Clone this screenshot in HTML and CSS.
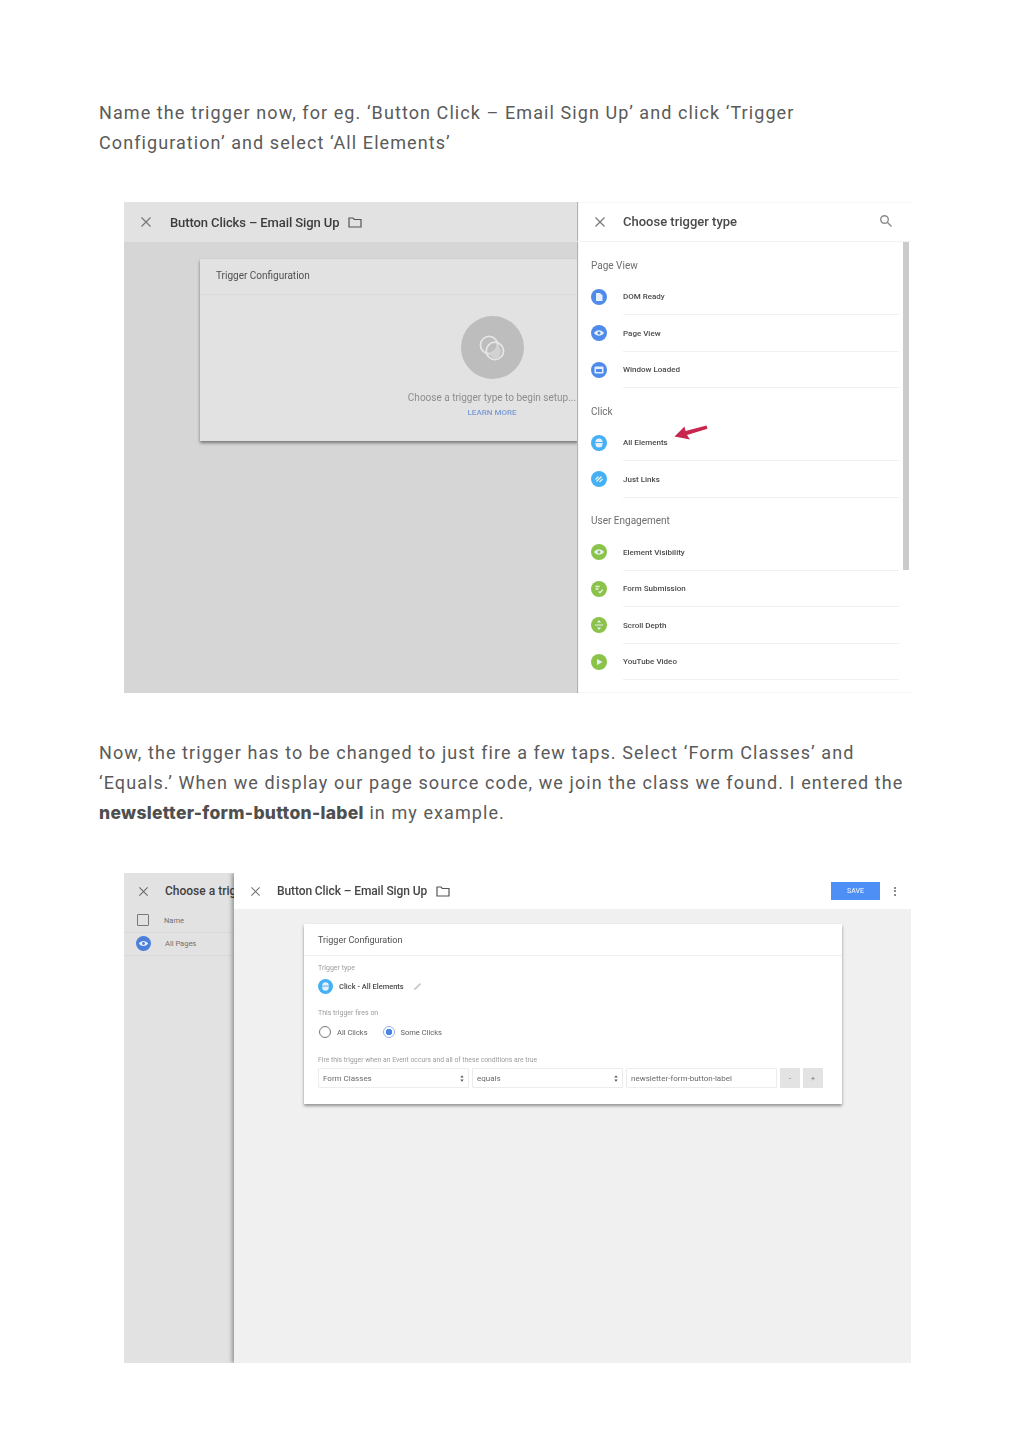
FILE: index.html
```html
<!DOCTYPE html>
<html lang="en">
<head>
<meta charset="utf-8">
<title>Trigger setup</title>
<link rel="stylesheet" href="styles.css">
</head>
<body>
<main class="article">
  <p class="para">Name the trigger now, for eg. ‘Button Click – Email Sign Up’ and click ‘Trigger Configuration’ and select ‘All Elements’</p>

  <figure class="shot shot-one">
    <section class="dim-pane">
      <header class="bar bar-dim">
        <svg class="x" viewBox="0 0 12 12"><path d="M1.5 1.5l9 9M10.5 1.5l-9 9"/></svg>
        <span class="bar-title">Button Clicks – Email Sign Up</span>
        <svg class="folder" viewBox="0 0 14 12"><path d="M1 2h4l1.3 1.5H13V11H1z"/></svg>
      </header>
      <div class="config-card">
        <div class="config-head">Trigger Configuration</div>
        <div class="config-empty">
          <div class="disc">
            <svg viewBox="0 0 26 26"><circle cx="10.5" cy="10.5" r="7.5"/><circle cx="15.5" cy="15.5" r="7.5"/><path class="wedge" d="M10 17a7.5 7.5 0 0 0 7-7 7.5 7.5 0 0 1 1 12 7.500 7.500 0 0 1-8-5z"/></svg>
          </div>
          <p class="empty-text">Choose a trigger type to begin setup...</p>
          <p class="empty-link">LEARN MORE</p>
        </div>
      </div>
    </section>
    <aside class="chooser">
      <header class="bar bar-white">
        <svg class="x" viewBox="0 0 12 12"><path d="M1.5 1.5l9 9M10.500 1.5l-9 9"/></svg>
        <span class="chooser-title">Choose trigger type</span>
        <svg class="search" viewBox="0 0 14 14"><circle cx="5.500" cy="5.500" r="3.800"/><path d="M8.500 8.500l4 4"/></svg>
      </header>
      <div class="chooser-body">
        <div class="list">
          <h3 class="group">Page View</h3>
          <div class="row"><span class="dot blue"><svg viewBox="0 0 16 16"><path class="fill" d="M5 4h4l2.500 2.500V12H5z"/></svg></span><span class="row-text">DOM Ready</span></div>
          <div class="row"><span class="dot blue"><svg viewBox="0 0 16 16"><path class="fill" d="M3 8c2.500-3.600 7.500-3.600 10 0-2.500 3.600-7.500 3.600-10 0z"/><circle class="inner-blue" cx="8" cy="8" r="1.500"/></svg></span><span class="row-text">Page View</span></div>
          <div class="row"><span class="dot blue"><svg viewBox="0 0 16 16"><rect class="fill" x="3.500" y="4.500" width="9" height="7" rx="1"/><rect class="inner-blue" x="5" y="7" width="6" height="3"/></svg></span><span class="row-text">Window Loaded</span></div>
          <h3 class="group">Click</h3>
          <div class="row"><span class="dot sky"><svg viewBox="0 0 16 16"><rect class="fill" x="4.500" y="3.500" width="7" height="9" rx="3.500"/><path class="cut-sky" d="M4.500 7.500h7"/></svg></span><span class="row-text">All Elements</span></div>
          <div class="row"><span class="dot sky"><svg viewBox="0 0 16 16"><path class="stroke" d="M5.500 10.500l5-5M4.500 8.500l3-3M8.500 11l3-3"/></svg></span><span class="row-text">Just Links</span></div>
          <h3 class="group">User Engagement</h3>
          <div class="row"><span class="dot green"><svg viewBox="0 0 16 16"><path class="fill" d="M3 8c2.500-3.600 7.500-3.600 10 0-2.500 3.600-7.500 3.600-10 0z"/><circle class="inner-green" cx="8" cy="8" r="1.500"/></svg></span><span class="row-text">Element Visibility</span></div>
          <div class="row"><span class="dot green"><svg viewBox="0 0 16 16"><path class="stroke" d="M4.500 5.500h4M4.500 8h3M7.500 10.500l1.500 1.200 2.800-3"/></svg></span><span class="row-text">Form Submission</span></div>
          <div class="row"><span class="dot green"><svg viewBox="0 0 16 16"><path class="fill" d="M8 3l2 2.500H6zM8 13l-2-2.500h4zM4 7.500h8v1H4z"/></svg></span><span class="row-text">Scroll Depth</span></div>
          <div class="row"><span class="dot green"><svg viewBox="0 0 16 16"><path class="fill" d="M6 5l5.500 3L6 11z"/></svg></span><span class="row-text">YouTube Video</span></div>
        </div>
        <div class="scrollbar"></div>
      </div>
      <svg class="arrow" viewBox="0 0 34 18"><path d="M0.500 11.500L10.500 1.500l1 4.500L32.500 0.500l1 3.200-20.500 6.300 3 4.500z"/></svg>
    </aside>
  </figure>

  <p class="para para-two">Now, the trigger has to be changed to just fire a few taps. Select ‘Form Classes’ and ‘Equals.’ When we display our page source code, we join the class we found. I entered the <strong>newsletter-form-button-label</strong> in my example.</p>

  <figure class="shot shot-two">
    <section class="back-pane">
      <header class="back-head">
        <svg class="x" viewBox="0 0 12 12"><path d="M1.500 1.500l9 9M10.500 1.500l-9 9"/></svg>
        <span class="back-title">Choose a trigger</span>
      </header>
      <div class="back-row back-row-first"><span class="check"></span><span>Name</span></div>
      <div class="back-row"><span class="dot blue-deep"><svg viewBox="0 0 16 16"><path class="fill" d="M3 8c2.500-3.600 7.500-3.600 10 0-2.500 3.600-7.500 3.600-10 0z"/><circle class="inner-deep" cx="8" cy="8" r="1.500"/></svg></span><span>All Pages</span></div>
    </section>
    <section class="edit-pane">
      <header class="bar bar-edit">
        <svg class="x" viewBox="0 0 12 12"><path d="M1.500 1.500l9 9M10.500 1.500l-9 9"/></svg>
        <span class="bar-title">Button Click – Email Sign Up</span>
        <svg class="folder" viewBox="0 0 14 12"><path d="M1 2h4l1.300 1.500H13V11H1z"/></svg>
        <span class="save">SAVE</span>
        <span class="kebab"><i></i><i></i><i></i></span>
      </header>
      <div class="form-card">
        <div class="form-head">Trigger Configuration</div>
        <div class="form-body">
          <div class="caption">Trigger type</div>
          <div class="type-line">
            <span class="dot sky dot-lg"><svg viewBox="0 0 16 16"><rect class="fill" x="4.500" y="3.500" width="7" height="9" rx="3.500"/><path class="cut-sky" d="M4.500 7.500h7"/></svg></span>
            <span class="type-name">Click - All Elements</span>
            <svg class="pencil" viewBox="0 0 10 10"><path d="M1 9l1.800-.4L9 2.400 7.600 1 1.400 7.200z"/></svg>
          </div>
          <div class="caption caption-fires">This trigger fires on</div>
          <div class="radios">
            <span class="radio"></span><span class="radio-label">All Clicks</span>
            <span class="radio radio-on"></span><span class="radio-label">Some Clicks</span>
          </div>
          <div class="caption caption-cond">Fire this trigger when an Event occurs and all of these conditions are true</div>
          <div class="cond">
            <span class="field select">Form Classes<svg class="updown" viewBox="0 0 6 10"><path d="M3 0l2.500 3.500h-5zM3 10L.5 6.500h5z"/></svg></span>
            <span class="field select">equals<svg class="updown" viewBox="0 0 6 10"><path d="M3 0l2.500 3.500h-5zM3 10L.5 6.500h5z"/></svg></span>
            <span class="field value">newsletter-form-button-label</span>
            <span class="mini">-</span>
            <span class="mini">+</span>
          </div>
        </div>
      </div>
    </section>
  </figure>
</main>
</body>
</html>
```
FILE: styles.css
```css
* { box-sizing: border-box; }
html, body { margin: 0; padding: 0; background: #fff; }
body { height: 1449px; overflow: hidden; font-family: "Roboto", "Liberation Sans", sans-serif; }
.article { padding: 98px 0 0 99px; width: 926px; }
.para {
  margin: 0;
  font-family: "Roboto", "Liberation Sans", sans-serif;
  font-size: 18px;
  line-height: 30px;
  letter-spacing: 1.08px;
  color: #5a5a5a;
  font-weight: 400;
}
.para strong { font-family: "Inter", sans-serif; font-weight: 800; letter-spacing: 0.3px; font-size: 17.5px; color: #4f4f4f; }
.para-two { margin-top: 45px; }

.shot { margin: 0; width: 787px; display: flex; overflow: hidden; margin-left: 25px; filter: blur(0.35px); }
.shot-one { margin-top: 44px; height: 491px; }
.shot-two { margin-top: 45px; height: 490px; }

svg { display: block; }
.bar { height: 40px; display: flex; align-items: center; flex: none; }
.x { width: 12px; height: 12px; fill: none; stroke: #777; stroke-width: 1.200; flex: none; }
.bar-title { font-size: 13px; font-weight: 500; color: #3c3c3c; letter-spacing: -0.1px; }
.folder { width: 14px; height: 12px; fill: none; stroke: #555; stroke-width: 1.200; margin-left: 9px; flex: none; }

/* first screenshot */
.dim-pane { width: 453px; flex: none; background: #d6d6d6; display: flex; flex-direction: column; overflow: hidden; }
.bar-dim { background: #e2e2e2; padding-left: 16px; }
.bar-dim .bar-title { margin-left: 18px; }
.config-card {
  margin: 17px -1px 0 76px;
  height: 182px;
  background: #e2e2e2;
  box-shadow: 0 2px 3px rgba(0,0,0,.45);
}
.config-head { height: 36px; border-bottom: 1px solid #dadada; padding: 11px 0 0 16px; font-size: 10px; line-height: 12px; color: #505050; }
.config-empty { margin-left: 204px; width: 176px; display: flex; flex-direction: column; align-items: center; padding-top: 21px; }
.disc { width: 63px; height: 63px; border-radius: 50%; background: #bdbdbd; display: flex; align-items: center; justify-content: center; }
.disc svg { width: 30px; height: 30px; fill: none; stroke: #e6e6e6; stroke-width: 1.500; }
.disc .wedge { fill: #d2d2d2; stroke: none; }
.empty-text { margin: 13px 0 0; font-size: 10px; line-height: 12px; color: #8d8d8d; white-space: nowrap; }
.empty-link { margin: 4px 0 0; font-size: 8px; line-height: 10px; font-weight: 500; color: #7a9bd6; }

.chooser { flex: 1; position: relative; background: #fff; box-shadow: inset 1px 0 1px #a9a9a9; display: flex; flex-direction: column; }
.bar-white { border-bottom: 1px solid #f3f3f3; padding: 0 18px 0 17px; }
.chooser-title { margin-left: 17px; font-size: 13px; font-weight: 500; color: #4a4a4a; flex: 1; }
.search { width: 14px; height: 14px; fill: none; stroke: #8b8b8b; stroke-width: 1.400; margin-top: -2px; }
.chooser-body { flex: 1; display: flex; padding-left: 14px; }
.list { width: 308px; flex: none; }
.group { margin: 0; height: 36.500px; padding-top: 9.500px; display: flex; align-items: center; font-size: 10px; font-weight: 400; color: #6e6e6e; }
.row { height: 36.500px; display: flex; align-items: center; position: relative; }
.row::after { content: ""; position: absolute; left: 32px; right: 0; bottom: 0; height: 1px; background: #f1f1f1; }
.row-text { margin-left: 16px; font-size: 8px; font-weight: 500; color: #4b4b4b; }
.dot { width: 16px; height: 16px; border-radius: 50%; flex: none; display: block; }
.dot svg { width: 100%; height: 100%; }
.blue { background: #4f8bea; }
.sky { background: #45b0f5; }
.green { background: #8bc34a; }
.blue-deep { background: #4a7fdc; }
.fill { fill: #e6effb; }
.stroke { fill: none; stroke: #e9f3e2; stroke-width: 1.300; }
.inner-blue { fill: #4f8bea; }
.inner-green { fill: #8bc34a; }
.inner-deep { fill: #4a7fdc; }
.cut-sky { stroke: #45b0f5; stroke-width: 1; fill: none; }
.scrollbar { width: 6px; height: 328px; margin-left: 4px; background: #cbcbcb; flex: none; }
.arrow { position: absolute; left: 97px; top: 223px; width: 34px; height: 18px; fill: #c9264f; }

/* second screenshot */
.back-pane { width: 110px; flex: none; background: #e2e2e2; display: flex; flex-direction: column; overflow: hidden; }
.back-head { height: 36px; flex: none; display: flex; align-items: center; padding-left: 14px; }
.back-head .x { width: 11px; height: 11px; stroke: #6a6a6a; }
.back-title { margin-left: 16px; font-size: 12px; font-weight: 500; color: #404040; white-space: nowrap; }
.back-row { height: 23.500px; flex: none; display: flex; align-items: center; padding-left: 13px; border-bottom: 1px solid #d9d9d9; font-size: 7.500px; color: #707070; }
.back-row > span:last-child { margin-left: 14px; }
.back-row .dot { width: 15px; height: 15px; margin-left: -1px; }
.check { width: 12px; height: 12px; border: 1.500px solid #777; border-radius: 1px; flex: none; margin-right: 1px; }
.back-row-first { padding-top: 0; }

.edit-pane { flex: 1; background: #f0f0f0; box-shadow: -2px 0 4px rgba(0,0,0,.35); position: relative; display: flex; flex-direction: column; }
.bar-edit { height: 36px; background: #fff; padding: 0 12px 0 16px; }
.bar-edit .x { width: 11px; height: 11px; }
.bar-edit .bar-title { margin-left: 16px; font-size: 12px; color: #454545; }
.save { margin-left: auto; width: 49px; height: 18px; background: #4d8ff5; color: #dfeafc; font-size: 7px; font-weight: 500; display: flex; align-items: center; justify-content: center; }
.kebab { margin-left: 14px; margin-right: 3px; display: flex; flex-direction: column; gap: 1.500px; }
.kebab i { width: 2px; height: 2px; background: #666; border-radius: 50%; display: block; }

.form-card { margin: 15px 0 0 70px; width: 538px; height: 180px; background: #fff; box-shadow: 0 2px 3px rgba(0,0,0,.4); }
.form-head { height: 32px; border-bottom: 1px solid #f0f0f0; padding: 10px 0 0 14px; font-size: 9px; line-height: 12px; color: #505050; }
.form-body { padding: 8px 19px 0 14px; }
.caption { font-size: 7px; line-height: 9px; color: #9c9c9c; }
.type-line { display: flex; align-items: center; margin-top: 5px; height: 16px; }
.dot-lg { width: 15px; height: 15px; }
.type-name { margin-left: 6px; font-size: 7.500px; font-weight: 500; color: #4a4a4a; }
.pencil { width: 9px; height: 9px; margin-left: 9px; fill: #c9c9c9; }
.caption-fires { margin-top: 15px; }
.radios { display: flex; align-items: center; margin-top: 7px; height: 14px; }
.radio { width: 12px; height: 12px; border: 1.300px solid #777; border-radius: 50%; flex: none; display: block; margin-left: 1px; }
.radio-on { border-color: #8fb4ef; background: radial-gradient(circle, #4a84e6 0 3px, #fff 3.500px); margin-left: 15px; }
.radio-label { margin-left: 6px; font-size: 7.500px; color: #5f5f5f; }
.caption-cond { margin-top: 17px; font-size: 6.800px; white-space: nowrap; }
.cond { display: flex; gap: 3px; margin-top: 3px; height: 20px; }
.field { height: 20px; border: 1px solid #ececec; border-radius: 1px; font-size: 8px; color: #6b6b6b; display: flex; align-items: center; padding: 0 4px; justify-content: space-between; }
.select { width: 151px; }
.value { width: 151px; }
.updown { width: 4px; height: 7px; fill: #555; }
.mini { width: 20px; height: 20px; background: #e3e3e3; color: #777; font-size: 8px; display: flex; align-items: center; justify-content: center; }
```
